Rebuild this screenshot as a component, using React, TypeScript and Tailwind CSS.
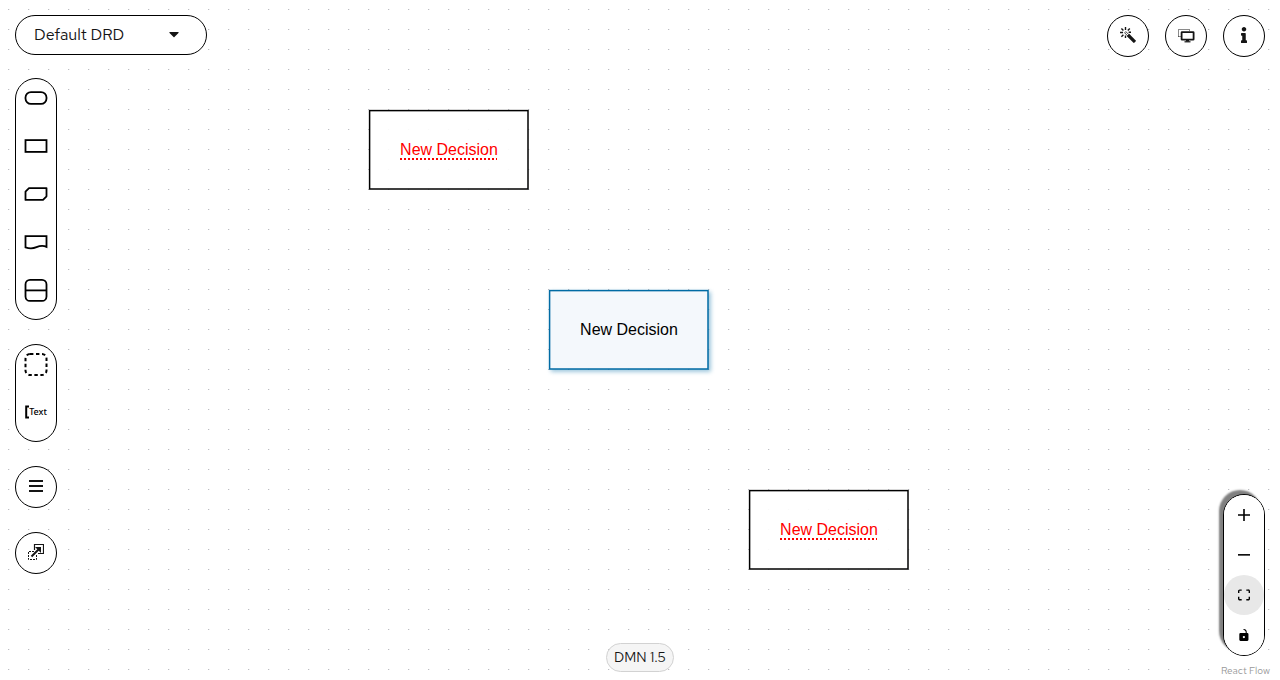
import type { ReactNode } from "react";

const canvasNodes = [
  { id: "a", position: "left-[369px] top-[110px]", selected: false },
  { id: "b", position: "left-[549px] top-[290px]", selected: true },
  { id: "c", position: "left-[749px] top-[490px]", selected: false },
];

function DecisionNode({ position, selected }: { position: string; selected: boolean }) {
  return (
    <div className={`absolute grid h-20 w-40 place-items-center ${position}`}>
      <svg
        className={`col-start-1 row-start-1 h-20 w-40 overflow-visible ${
          selected ? "drop-shadow-[2px_2px_2px_rgba(0,107,164,0.4)]" : ""
        }`}
        viewBox="0 0 160 80"
        aria-hidden="true"
      >
        <rect
          x="0.6"
          y="0.6"
          width="158.4"
          height="78.4"
          fill={selected ? "#f4f8fc" : "#ffffff"}
          fillOpacity={selected ? 1 : 0.9}
          stroke={selected ? "#006ba4" : "#000000"}
          strokeWidth="1.5"
        />
      </svg>
      <span
        className={`relative col-start-1 row-start-1 font-['Liberation_Sans',Arial,sans-serif] text-base leading-5 ${
          selected ? "text-black" : "text-[#ff0000] underline decoration-dotted decoration-2 underline-offset-[3px]"
        }`}
      >
        New Decision
      </span>
    </div>
  );
}

function RoundButton({ label, children }: { label: string; children: ReactNode }) {
  return (
    <button
      type="button"
      aria-label={label}
      className="flex size-[42px] items-center justify-center rounded-full border border-black bg-white pb-[2px] text-[#151515]"
    >
      {children}
    </button>
  );
}

function PaletteItem({ label, children }: { label: string; children: ReactNode }) {
  return (
    <button type="button" aria-label={label} className="mb-2 flex size-10 items-center justify-center pb-[2px]">
      {children}
    </button>
  );
}

function Glyph({ children }: { children: ReactNode }) {
  return (
    <svg width="24" height="24" viewBox="0 0 24 24" fill="none" stroke="#000" strokeWidth="1.8" aria-hidden="true">
      {children}
    </svg>
  );
}

function ControlButton({ label, active, children }: { label: string; active?: boolean; children: ReactNode }) {
  return (
    <button
      type="button"
      aria-label={label}
      className={`flex size-10 items-center justify-center rounded-full ${active ? "bg-[#e8e8e8]" : "bg-white"}`}
    >
      {children}
    </button>
  );
}

export default function App() {
  return (
    <main className="relative flex min-h-screen flex-col overflow-hidden bg-white font-['Red_Hat_Text',Lato,sans-serif] text-[#151515]">
      <div className="absolute inset-0">
        <svg className="size-full" aria-hidden="true">
          <pattern id="dots" x="8.2" y="9" width="20" height="20" patternUnits="userSpaceOnUse">
            <circle cx="0.5" cy="0.5" r="0.5" fill="#91919a" />
          </pattern>
          <rect width="100%" height="100%" fill="url(#dots)" />
        </svg>
        {canvasNodes.map((n) => (
          <DecisionNode key={n.id} position={n.position} selected={n.selected} />
        ))}
      </div>

      <header className="relative flex items-start justify-between px-[15px] pt-[15px]">
        <div className="grid w-48 items-center">
          <select
            aria-label="Diagram"
            className="col-start-1 row-start-1 h-10 appearance-none rounded-full border border-black bg-white pr-12 pb-px pl-[18px] text-base"
          >
            <option>Default DRD</option>
          </select>
          <svg
            className="pointer-events-none relative col-start-1 row-start-1 mr-7 mb-[2px] justify-self-end"
            width="10"
            height="16"
            viewBox="0 0 320 512"
            fill="#151515"
            aria-hidden="true"
          >
            <path d="M31.3 192h257.3c17.8 0 26.7 21.5 14.1 34.1L174.1 354.8c-7.8 7.8-20.5 7.8-28.3 0L17.2 226.1C4.6 213.5 13.5 192 31.3 192z" />
          </svg>
        </div>
        <div className="flex gap-4">
          <RoundButton label="Autolayout">
            <svg width="16" height="16" viewBox="0 0 16 16" fill="none" stroke="currentColor" aria-hidden="true">
              <path d="M8 8l7 7" strokeWidth="3.2" />
              <path d="M4.6 5.8l1.2-1.2 3 3-1.2 1.2z" strokeWidth="0.8" />
              <path d="M5.5 0v3M0 5.5h3M1.4 1.4l2 2M9.8 1.4l-2 2M1.4 9.8l2-2M5.5 8.4v2.6M8.6 5.3H11" strokeWidth="1.4" />
            </svg>
          </RoundButton>
          <RoundButton label="Overlays">
            <svg width="18" height="16" viewBox="0 0 18 16" fill="none" stroke="currentColor" aria-hidden="true">
              <path d="M1.5 9.5v-7h11v2" strokeDasharray="1 1" />
              <path d="M1.5 9.5h3" strokeDasharray="1 1" />
              <rect x="4.6" y="5.2" width="12" height="7.4" rx="0.4" strokeWidth="1.8" />
              <path d="M10.5 12.5v2" strokeWidth="3" />
              <path d="M7.5 14.8h6" strokeWidth="1.2" />
            </svg>
          </RoundButton>
          <RoundButton label="Properties">
            <svg width="6" height="16" viewBox="0 0 192 512" fill="currentColor" aria-hidden="true">
              <path d="M20 424.2h20V279.8H20c-11 0-20-9-20-20V212c0-11 9-20 20-20h112c11 0 20 9 20 20v212.2h20c11 0 20 9 20 20V492c0 11-9 20-20 20H20c-11 0-20-9-20-20v-47.8c0-11 9-20 20-20zM96 0C56.2 0 24 32.2 24 72s32.2 72 72 72 72-32.2 72-72S135.8 0 96 0z" />
            </svg>
          </RoundButton>
        </div>
      </header>

      <div className="relative mt-[21px] flex flex-1 items-start justify-between px-[15px] pb-6">
        <aside className="flex flex-col gap-6">
          <div className="flex flex-col rounded-full border border-black bg-white">
            <PaletteItem label="Input Data">
              <Glyph>
                <rect x="1.5" y="6.1" width="21" height="11.8" rx="5.5" />
              </Glyph>
            </PaletteItem>
            <PaletteItem label="Decision">
              <Glyph>
                <rect x="1.5" y="6.1" width="21" height="11.8" />
              </Glyph>
            </PaletteItem>
            <PaletteItem label="Business Knowledge Model">
              <Glyph>
                <path d="M5 6.1h17.5v8.2l-3.5 3.6H1.5V9.6z" strokeLinejoin="round" />
              </Glyph>
            </PaletteItem>
            <PaletteItem label="Knowledge Source">
              <Glyph>
                <path d="M1.5 6.1h21v10.8c-4-2-7-1-10 .3s-7 1.6-11 .2z" />
              </Glyph>
            </PaletteItem>
            <PaletteItem label="Decision Service">
              <Glyph>
                <rect x="1.5" y="1.9" width="21" height="21" rx="4.5" />
                <path d="M1.5 12.4h21" />
              </Glyph>
            </PaletteItem>
          </div>

          <div className="flex flex-col rounded-full border border-black bg-white">
            <PaletteItem label="Group">
              <Glyph>
                <rect x="1.5" y="2" width="21" height="21" rx="4.5" strokeWidth="2" strokeDasharray="3.4 2.6" />
              </Glyph>
            </PaletteItem>
            <PaletteItem label="Text Annotation">
              <svg width="4" height="14" viewBox="0 0 4 14" fill="none" stroke="#000" strokeWidth="2" aria-hidden="true">
                <path d="M4 1.5H1.2v11H4" />
              </svg>
              <span className="font-['Noto_Sans',sans-serif] text-[9px] leading-4 font-medium text-black">Text</span>
            </PaletteItem>
          </div>

          <RoundButton label="Nodes">
            <svg width="14" height="14" viewBox="0 0 14 14" fill="none" stroke="currentColor" strokeWidth="2" aria-hidden="true">
              <path d="M0 2h14M0 7h14M0 12h14" />
            </svg>
          </RoundButton>
          <RoundButton label="External nodes">
            <svg width="16" height="16" viewBox="0 0 16 16" fill="none" stroke="currentColor" aria-hidden="true">
              <path d="M6.5 6V.5h9v9H10" strokeWidth="1.2" />
              <path d="M6 7.5H.5v8h8V10" strokeDasharray="2 1" />
              <path d="M3.5 12.5L11 5" strokeWidth="2" />
              <path d="M7 3h6v6z" fill="currentColor" stroke="none" />
            </svg>
          </RoundButton>
        </aside>

        <div className="flex flex-col self-end rounded-full border border-black bg-white shadow-[-4px_-4px_2px_0px_#808080]">
          <ControlButton label="Zoom in">
            <svg width="12" height="12" viewBox="0 0 32 32" aria-hidden="true">
              <path d="M32 18.133H18.133V32h-4.266V18.133H0v-4.266h13.867V0h4.266v13.867H32z" />
            </svg>
          </ControlButton>
          <ControlButton label="Zoom out">
            <svg width="12" height="2" viewBox="0 0 32 5" aria-hidden="true">
              <path d="M0 0h32v4.2H0z" />
            </svg>
          </ControlButton>
          <ControlButton label="Fit view" active>
            <svg width="12" height="12" viewBox="0 0 32 30" aria-hidden="true">
              <path d="M3.692 4.63c0-.53.4-.938.939-.938h5.215V0H4.708C2.13 0 0 2.054 0 4.63v5.216h3.692V4.631zM27.354 0h-5.2v3.692h5.17c.53 0 .984.4.984.939v5.215H32V4.631A4.624 4.624 0 0027.354 0zm.954 24.83c0 .532-.4.94-.939.94h-5.215v3.768h5.215c2.577 0 4.631-2.13 4.631-4.707v-5.139h-3.692v5.139zm-23.677.94c-.531 0-.939-.4-.939-.94v-5.138H0v5.139c0 2.577 2.13 4.707 4.708 4.707h5.138V25.77H4.631z" />
            </svg>
          </ControlButton>
          <ControlButton label="Toggle interactivity">
            <svg width="10" height="12" viewBox="0 0 25 32" aria-hidden="true">
              <path d="M21.333 10.667H19.81V7.619C19.81 3.429 16.38 0 12.19 0c-4.114 1.828-1.37 2.133.305 2.438 1.676.305 4.42 2.59 4.42 5.181v3.048H3.047A3.056 3.056 0 000 13.714v15.238A3.056 3.056 0 003.048 32h18.285a3.056 3.056 0 003.048-3.048V13.714a3.056 3.056 0 00-3.048-3.047zM12.19 24.533a3.056 3.056 0 01-3.047-3.047 3.056 3.056 0 013.047-3.048 3.056 3.056 0 013.048 3.048 3.056 3.056 0 01-3.048 3.047z" />
            </svg>
          </ControlButton>
        </div>
      </div>

      <div className="absolute inset-x-0 bottom-2 flex justify-center">
        <span className="rounded-full border border-[#d2d2d2] bg-[#f5f5f5] px-[7px] py-1 text-sm leading-[19px]">DMN 1.5</span>
      </div>
      <a href="https://reactflow.dev" className="absolute right-[10px] bottom-px bg-white text-[10px] leading-4 text-[#999999]">
        React Flow
      </a>
    </main>
  );
}
